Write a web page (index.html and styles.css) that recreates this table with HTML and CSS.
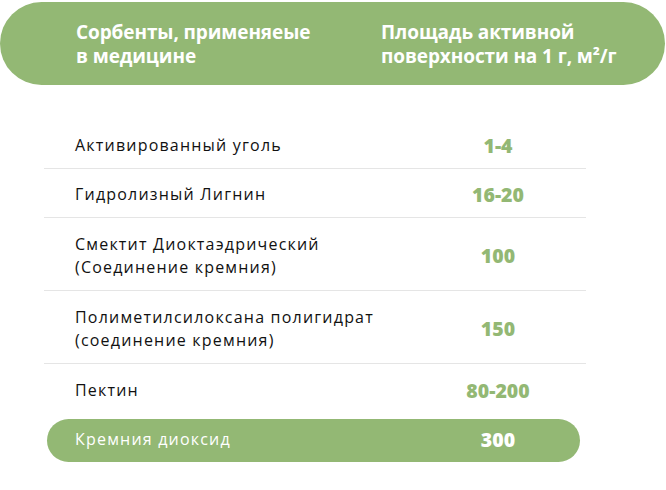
FILE: index.html
```html
<!DOCTYPE html>
<html lang="ru">
<head>
<meta charset="utf-8">
<link rel="stylesheet" href="styles.css">
</head>
<body>
<div class="page">
  <div class="head">
    <div class="head-col first">Сорбенты, применяеые<br>в медицине</div>
    <div class="head-col second">Площадь активной<br>поверхности на 1 г, м²/г</div>
  </div>
  <div class="table">
    <div class="row">
      <div class="name">Активированный уголь</div>
      <div class="val">1-4</div>
    </div>
    <div class="row">
      <div class="name">Гидролизный Лигнин</div>
      <div class="val">16-20</div>
    </div>
    <div class="row">
      <div class="name">Смектит Диоктаэдрический<br>(Соединение кремния)</div>
      <div class="val">100</div>
    </div>
    <div class="row">
      <div class="name">Полиметилсилоксана полигидрат<br>(соединение кремния)</div>
      <div class="val">150</div>
    </div>
    <div class="row last">
      <div class="name">Пектин</div>
      <div class="val">80-200</div>
    </div>
    <div class="pill">
      <div class="name">Кремния диоксид</div>
      <div class="val">300</div>
    </div>
  </div>
</div>
</body>
</html>
```
FILE: styles.css
```css
* { box-sizing: border-box; }
html, body { margin: 0; padding: 0; background: #fff; }
body {
  font-family: "Open Sans", "DejaVu Sans", sans-serif;
  width: 666px;
  height: 490px;
  overflow: hidden;
}
.page { padding-top: 2px; }
.head {
  margin-right: 1px;
  height: 83px;
  border-radius: 42px;
  background: #93b874;
  color: #fff;
  display: flex;
  align-items: center;
  font-weight: 700;
  font-size: 19px;
  line-height: 24px;
  letter-spacing: -0.1px;
}
.head-col.first { width: 381px; padding-left: 76px; }
.head-col.second { flex: 1; }
.table {
  margin: 34px 0 0 44px;
  width: 542px;
}
.row {
  display: grid;
  grid-template-columns: 366px 176px;
  align-items: center;
  padding: 14.5px 0 10.5px;
  border-bottom: 1px solid #e5e5e5;
}
.row.last { border-bottom: none; }
.name {
  padding-left: 31px;
  font-size: 16px;
  line-height: 23.5px;
  letter-spacing: 1.2px;
  color: #111;
}
.val {
  text-align: center;
  font-weight: 800;
  font-size: 19.5px;
  line-height: 23.5px;
  color: #93b874;
}
.pill {
  margin: 6px 0 0 3px;
  width: 533px;
  height: 43px;
  border-radius: 22px;
  background: #93b874;
  display: grid;
  grid-template-columns: 363px 170px;
  align-items: center;
}
.pill .name { color: #fff; padding-left: 28px; }
.pill .val { color: #fff; padding-left: 6px; }
```
